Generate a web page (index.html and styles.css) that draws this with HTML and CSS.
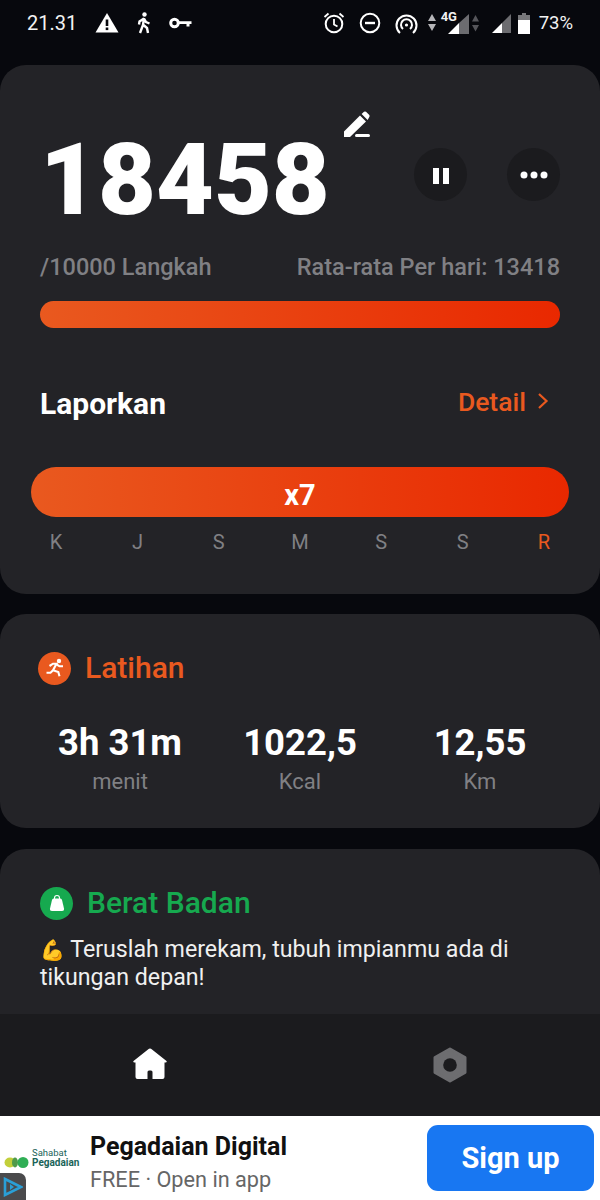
FILE: index.html
```html
<!DOCTYPE html>
<html lang="en">
<head>
    <meta charset="UTF-8">
    <meta name="viewport" content="width=device-width, initial-scale=1.0">
    <title>Langkah</title>
    <link rel="stylesheet" href="styles.css">
</head>
<body>
    <div class="status-bar">
        <div class="status-left">
            <span class="status-time">21.31</span>
            <svg class="ic-warn" width="24" height="22" viewBox="0 0 24 22"><path fill="#fff" d="M12 1 L23.5 20.5 H0.5 Z"/><rect x="10.7" y="7.5" width="2.6" height="6.5" fill="#07080d"/><rect x="10.7" y="15.5" width="2.6" height="2.6" fill="#07080d"/></svg>
            <svg class="ic-walk" width="14" height="22" viewBox="0 0 14 22"><circle cx="7.5" cy="2.5" r="2.2" fill="#fff"/><path fill="none" stroke="#fff" stroke-width="2.4" d="M7 6 L6 13 L3 21 M6.5 13 L10 16 L11 21 M7 6.5 L2.5 9.5 L2 12.5 M7 6.5 L9 10 L12.5 11.5"/></svg>
            <svg class="ic-key" width="23" height="12" viewBox="0 0 23 12"><circle cx="5.5" cy="6" r="3.8" fill="none" stroke="#fff" stroke-width="3"/><path fill="#fff" d="M9 4.2 H22.5 V7 H20.5 V9.5 H17.5 V7 H9 Z"/></svg>
        </div>
        <div class="status-right">
            <svg class="ic-alarm" width="22" height="22" viewBox="0 0 22 22"><circle cx="11" cy="12" r="8.3" fill="none" stroke="#fff" stroke-width="2"/><path fill="none" stroke="#fff" stroke-width="1.8" d="M11 7 V12.5 L14.5 14.5 M1.5 5 L5.5 1.5 M20.5 5 L16.5 1.5"/></svg>
            <svg class="ic-dnd" width="22" height="22" viewBox="0 0 22 22"><circle cx="11" cy="11" r="9.3" fill="none" stroke="#fff" stroke-width="2"/><rect x="6" y="9.8" width="10" height="2.4" fill="#fff"/></svg>
            <svg class="ic-hotspot" width="23" height="21" viewBox="0 0 23 21"><path fill="none" stroke="#fff" stroke-width="2" d="M5 20 A10 10 0 1 1 18 20 M8 16 A5.5 5.5 0 1 1 15 16"/><circle cx="11.5" cy="12" r="1.6" fill="#fff"/></svg>
            <svg class="ic-arrows" width="10" height="18" viewBox="0 0 10 18"><path fill="#b5b5b8" d="M5 0 L9 7 H1 Z M1 10 H9 L5 17 Z"/></svg>
            <div class="signal-4g">
                <span class="label-4g">4G</span>
                <svg width="21" height="20" viewBox="0 0 21 20"><path fill="#6c6c70" d="M21 0 V20 H11 V9 Z"/><path fill="#fff" d="M11 9 V20 H0 Z"/></svg>
            </div>
            <svg class="ic-arrows-dim" width="7" height="17" viewBox="0 0 7 17"><path fill="#55555a" d="M3.5 0 L7 6.5 H0 Z M0 10 H7 L3.5 16.5 Z"/></svg>
            <svg class="ic-signal" width="19" height="19" viewBox="0 0 19 19"><path fill="#6c6c70" d="M19 0 V19 H10 V9 Z"/><path fill="#fff" d="M10 9 V19 H0 Z"/></svg>
            <svg class="ic-battery" width="12" height="21" viewBox="0 0 12 21"><path fill="#77777a" d="M4 0 H8 V2 H12 V7 H0 V2 H4 Z"/><rect y="7" width="12" height="14" fill="#fff"/></svg>
            <span class="status-pct">73%</span>
        </div>
    </div>

    <main class="content">
        <section class="card card-steps">
            <div class="steps-top">
                <span class="steps-count">18458</span>
                <svg class="ic-edit" width="28" height="28" viewBox="0 0 28 28"><path fill="#fff" d="M1 20.5 L17 4.5 L23 10.5 L7 26 H1 Z M18.6 3 L21 0.8 Q22 0 23 0.8 L26.3 4 Q27 5 26.3 6 L24.6 8.9 Z"/><rect x="12" y="23" width="15" height="3" rx="1.5" fill="#fff"/></svg>
                <div class="steps-actions">
                    <div class="round-btn">
                        <svg class="ic-pause" width="18" height="18" viewBox="0 0 18 18"><rect x="1" y="1" width="6" height="16" fill="#fff"/><rect x="11" y="1" width="6" height="16" fill="#fff"/></svg>
                    </div>
                    <div class="round-btn">
                        <svg width="28" height="8" viewBox="0 0 28 8"><circle cx="4" cy="4" r="3.5" fill="#fff"/><circle cx="14" cy="4" r="3.5" fill="#fff"/><circle cx="24" cy="4" r="3.5" fill="#fff"/></svg>
                    </div>
                </div>
            </div>
            <div class="steps-sub">
                <span>/10000 Langkah</span>
                <span>Rata-rata Per hari: 13418</span>
            </div>
            <div class="progress"></div>
            <div class="report-head">
                <span class="report-title">Laporkan</span>
                <span class="report-link">Detail
                    <svg width="12" height="18" viewBox="0 0 12 18"><path fill="none" stroke="#e9591f" stroke-width="2.2" d="M2 2 L9.5 9 L2 16"/></svg>
                </span>
            </div>
            <div class="streak">x7</div>
            <div class="days">
                <span>K</span><span>J</span><span>S</span><span>M</span><span>S</span><span>S</span><span class="day-now">R</span>
            </div>
        </section>

        <section class="card card-workout">
            <div class="card-head">
                <span class="badge badge-orange">
                    <svg width="22" height="22" viewBox="0 0 22 22"><circle cx="15" cy="4" r="2.2" fill="#fff"/><path fill="none" stroke="#fff" stroke-width="2.1" d="M5.5 9 L9 6.7 L12.5 6.7 L9 13.3 L6.5 15.7 L2.5 15.7 M9 13.3 L14.3 15 L15.5 19.3 M12 7 L15.5 9.3 L19 9.3"/></svg>
                </span>
                <span class="head-title title-orange">Latihan</span>
            </div>
            <div class="stats">
                <div class="stat"><span class="stat-val">3h 31m</span><span class="stat-unit">menit</span></div>
                <div class="stat"><span class="stat-val">1022,5</span><span class="stat-unit">Kcal</span></div>
                <div class="stat"><span class="stat-val">12,55</span><span class="stat-unit">Km</span></div>
            </div>
        </section>

        <section class="card card-weight">
            <div class="card-head">
                <span class="badge badge-green">
                    <svg width="18" height="18" viewBox="0 0 18 18"><path fill="none" stroke="#fff" stroke-width="1.1" d="M6.5 5 V4 A2.5 2.5 0 0 1 11.5 4 V5"/><path fill="#fff" d="M5.5 4.5 H12.5 Q13.6 4.5 14 6 L16 14.5 Q16.3 17 14 17 H4 Q1.7 17 2 14.5 L4 6 Q4.4 4.5 5.5 4.5 Z"/></svg>
                </span>
                <span class="head-title title-green">Berat Badan</span>
            </div>
            <p class="weight-text"><span class="emoji">💪</span> Teruslah merekam, tubuh impianmu ada di tikungan depan!</p>
        </section>
    </main>

    <nav class="tabbar">
        <svg class="ic-home" width="34" height="32" viewBox="0 0 34 32"><path fill="#fff" d="M17 0.5 Q18 0.5 19 1.5 L33.5 13 Q34.3 14.5 32.5 14.5 H31.5 V29 Q31.5 31 29.5 31 H19.5 V24 Q19.5 22.5 18 22.5 H16 Q14.5 22.5 14.5 24 V31 H4.5 Q2.5 31 2.5 29 V14.5 H1.5 Q-0.3 14.5 0.5 13 L15 1.5 Q16 0.5 17 0.5 Z"/></svg>
        <svg width="34" height="36" viewBox="0 0 34 36"><path fill="#6d6d70" stroke="#6d6d70" stroke-width="3" stroke-linejoin="round" fill-rule="evenodd" d="M17 2 L32 10.5 V25.5 L17 34 L2 25.5 V10.5 Z"/><circle cx="17" cy="18" r="6.8" fill="#1b1b1e"/></svg>
    </nav>

    <footer class="ad">
        <div class="ad-logo">
            <div class="ad-brand">
                <svg width="25" height="11" viewBox="0 0 25 11"><ellipse cx="6" cy="5.5" rx="5.5" ry="5" fill="#c2cf3a"/><ellipse cx="11" cy="5.5" rx="3" ry="5" fill="#4f9a4a"/><circle cx="19" cy="5.5" r="5.5" fill="#2fae55"/></svg>
                <div class="ad-brand-text"><span class="brand-small">Sahabat</span><span class="brand-big">Pegadaian</span></div>
            </div>
            <div class="ad-choice">
                <svg width="20" height="20" viewBox="0 0 20 20"><path fill="none" stroke="#2a9fd6" stroke-width="2.6" d="M2 2 L18 10 L2 18 Z"/><path fill="#2a9fd6" d="M7 7 L11 10 L7 13 Z"/></svg>
            </div>
        </div>
        <div class="ad-info">
            <span class="ad-title">Pegadaian Digital</span>
            <span class="ad-sub">FREE · Open in app</span>
        </div>
        <div class="ad-btn">Sign up</div>
    </footer>
</body>
</html>
```

FILE: styles.css
```css
* {
    box-sizing: border-box;
}
body {
    margin: 0;
    width: 600px;
    height: 1200px;
    overflow: hidden;
    display: flex;
    flex-direction: column;
    font-family: Roboto, "Noto Sans", sans-serif;
    background-color: #07080d;
    color: #fff;
}
.status-bar {
    height: 46px;
    flex: none;
    display: flex;
    justify-content: space-between;
    align-items: center;
    padding: 0 27px;
    font-size: 20px;
    color: #f2f2f2;
}
.status-left, .status-right {
    display: flex;
    align-items: center;
}
.status-left {
    gap: 18px;
}
.ic-dnd, .ic-hotspot {
    margin-left: 14px;
}
.ic-arrows {
    margin-left: 9px;
}
.signal-4g {
    position: relative;
    width: 21px;
    height: 22px;
    margin-left: 11px;
    display: flex;
    align-items: flex-end;
}
.label-4g {
    position: absolute;
    left: -7px;
    top: -3px;
    font-size: 13px;
    line-height: 15px;
    font-weight: 700;
}
.ic-arrows-dim {
    margin-left: 3px;
}
.ic-signal {
    margin-left: 13px;
}
.ic-battery {
    margin-left: 7px;
}
.status-pct {
    margin-left: 9px;
    font-size: 18.5px;
}
.content {
    flex: 1;
    overflow: hidden;
    padding-top: 19px;
    display: flex;
    flex-direction: column;
    gap: 20px;
}
.card {
    background-color: #232327;
    border-radius: 26px;
    flex: none;
}
.card-steps {
    height: 529px;
    padding: 0 40px;
}
.steps-top {
    position: relative;
    display: flex;
    justify-content: space-between;
    padding-top: 60px;
    height: 180px;
}
.steps-count {
    font-size: 100px;
    line-height: 110px;
    font-weight: 900;
}
.ic-edit {
    position: absolute;
    left: 303px;
    top: 46px;
}
.steps-actions {
    display: flex;
    gap: 40px;
    padding-top: 23px;
}
.round-btn {
    width: 53px;
    height: 53px;
    border-radius: 50%;
    background-color: #1b1b1e;
    display: flex;
    align-items: center;
    justify-content: center;
}
.ic-pause {
    margin-top: 3px;
}
.steps-sub {
    display: flex;
    justify-content: space-between;
    font-size: 23.5px;
    font-weight: 500;
    line-height: 28px;
    color: #808084;
    margin-top: 8px;
}
.progress {
    height: 27px;
    border-radius: 14px;
    background: linear-gradient(90deg, #e9591f, #e92800);
    margin-top: 20px;
}
.report-head {
    display: flex;
    justify-content: space-between;
    align-items: center;
    margin-top: 57px;
    height: 36px;
}
.report-title {
    font-size: 30px;
    font-weight: 700;
}
.report-link {
    display: flex;
    align-items: center;
    gap: 11px;
    font-size: 26.5px;
    font-weight: 500;
    color: #e9591f;
    padding-right: 11px;
    margin-top: -4px;
}
.streak {
    height: 50px;
    margin: 46px -9px 0;
    padding-top: 5px;
    border-radius: 25px;
    background: linear-gradient(90deg, #e9591f, #e92800);
    font-size: 29px;
    font-weight: 700;
    display: flex;
    align-items: center;
    justify-content: center;
}
.days {
    display: grid;
    grid-template-columns: repeat(7, 1fr);
    margin: 13px 0 0 -24.5px;
    width: 569px;
    font-size: 20px;
    color: #808084;
    text-align: center;
}
.day-now {
    color: #e9591f;
}
.card-workout {
    height: 214px;
    padding: 34px 38px 0;
}
.card-head {
    display: flex;
    align-items: center;
    gap: 14px;
}
.badge {
    width: 33px;
    height: 33px;
    border-radius: 50%;
    display: flex;
    align-items: center;
    justify-content: center;
}
.badge-orange {
    background-color: #e9591f;
}
.badge-green {
    background-color: #16a94f;
}
.head-title {
    font-size: 30px;
    font-weight: 500;
    line-height: 40px;
}
.title-orange {
    color: #e9591f;
}
.title-green {
    color: #16a94f;
}
.stats {
    display: grid;
    grid-template-columns: repeat(3, 180px);
    margin: 33px 0 0 -8px;
    text-align: center;
}
.stat {
    display: flex;
    flex-direction: column;
}
.stat-val {
    font-size: 36.5px;
    font-weight: 700;
    line-height: 44px;
}
.stat-unit {
    font-size: 22px;
    line-height: 30px;
    color: #808084;
    margin-top: 2px;
}
.card-weight {
    height: 220px;
    margin-top: 1px;
    padding: 34px 40px 0;
}
.weight-text {
    margin: 12px 0 0;
    font-size: 23.2px;
    line-height: 28px;
    color: #f0f0f0;
}
.emoji {
    font-family: "Noto Color Emoji", "DejaVu Sans", sans-serif;
    font-size: 20px;
    line-height: 20px;
}
.tabbar {
    position: absolute;
    left: 0;
    top: 1014px;
    width: 600px;
    height: 102px;
    background-color: #1b1b1e;
    display: flex;
    justify-content: space-between;
    align-items: center;
    padding: 0 133px;
}
.ic-home {
    margin-top: -2px;
}
.ad {
    position: absolute;
    left: 0;
    top: 1116px;
    width: 600px;
    height: 84px;
    background-color: #fff;
    display: flex;
    align-items: center;
}
.ad-logo {
    position: relative;
    width: 90px;
    height: 84px;
}
.ad-brand {
    position: absolute;
    left: 4px;
    top: 32px;
    display: flex;
    align-items: flex-end;
    gap: 3px;
}
.ad-brand-text {
    display: flex;
    flex-direction: column;
    color: #1a6459;
    line-height: 10px;
}
.brand-small {
    font-size: 9.5px;
}
.brand-big {
    font-size: 10px;
    font-weight: 700;
}
.ad-choice {
    position: absolute;
    left: 0;
    bottom: 0;
    width: 26px;
    height: 27px;
    background-color: #4a4a4c;
    border-top-right-radius: 7px;
    padding: 4px 0 0 3px;
}
.ad-info {
    display: flex;
    flex-direction: column;
    flex: 1;
    padding-top: 10px;
}
.ad-title {
    font-size: 25px;
    font-weight: 700;
    color: #111;
    line-height: 33px;
}
.ad-sub {
    font-size: 21.7px;
    color: #666;
    line-height: 33px;
}
.ad-btn {
    width: 167px;
    height: 66px;
    margin-right: 6px;
    border-radius: 11px;
    background-color: #1877f2;
    font-size: 29px;
    font-weight: 700;
    display: flex;
    align-items: center;
    justify-content: center;
}
```
